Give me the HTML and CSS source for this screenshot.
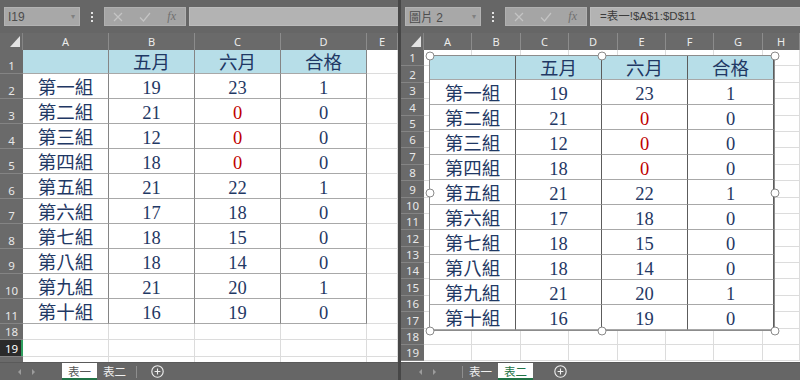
FILE: index.html
```html
<!DOCTYPE html>
<html lang="zh-Hant">
<head>
<meta charset="utf-8">
<title>Excel</title>
<link rel="stylesheet" href="styles.css">
</head>
<body>
<section class="pane pane-left">
  <div class="topbar">
    <div class="namebox"><span>I19</span><span class="caret">&#9662;</span></div>
    <div class="dots"><i></i><i></i><i></i></div>
    <div class="fxbtns">
      <span class="btn"><svg width="10" height="10" viewBox="0 0 10 10"><path d="M1 1L9 9M9 1L1 9" stroke="#c4c4c4" stroke-width="1.2" fill="none"/></svg></span>
      <span class="btn"><svg width="12" height="10" viewBox="0 0 12 10"><path d="M1 5.5L4.5 9L11 1" stroke="#c4c4c4" stroke-width="1.2" fill="none"/></svg></span>
      <span class="btn fx">fx</span>
    </div>
    <div class="formula"></div>
  </div>
  <div class="sheet">
    <div class="grid-left">
      <div class="corner"><i class="tri"></i></div>
      <div class="ch">A</div><div class="ch">B</div><div class="ch">C</div><div class="ch">D</div><div class="ch">E</div>

      <div class="rh">1</div><div class="t h"></div><div class="t h">五月</div><div class="t h">六月</div><div class="t h">合格</div><div class="c"></div>
      <div class="rh">2</div><div class="t">第一組</div><div class="t">19</div><div class="t">23</div><div class="t">1</div><div class="c"></div>
      <div class="rh">3</div><div class="t">第二組</div><div class="t">21</div><div class="t red">0</div><div class="t">0</div><div class="c"></div>
      <div class="rh">4</div><div class="t">第三組</div><div class="t">12</div><div class="t red">0</div><div class="t">0</div><div class="c"></div>
      <div class="rh">5</div><div class="t">第四組</div><div class="t">18</div><div class="t red">0</div><div class="t">0</div><div class="c"></div>
      <div class="rh">6</div><div class="t">第五組</div><div class="t">21</div><div class="t">22</div><div class="t">1</div><div class="c"></div>
      <div class="rh">7</div><div class="t">第六組</div><div class="t">17</div><div class="t">18</div><div class="t">0</div><div class="c"></div>
      <div class="rh">8</div><div class="t">第七組</div><div class="t">18</div><div class="t">15</div><div class="t">0</div><div class="c"></div>
      <div class="rh">9</div><div class="t">第八組</div><div class="t">18</div><div class="t">14</div><div class="t">0</div><div class="c"></div>
      <div class="rh">10</div><div class="t">第九組</div><div class="t">21</div><div class="t">20</div><div class="t">1</div><div class="c"></div>
      <div class="rh">11</div><div class="t">第十組</div><div class="t">16</div><div class="t">19</div><div class="t">0</div><div class="c"></div>
      <div class="rh">18</div><div class="c"></div><div class="c"></div><div class="c"></div><div class="c"></div><div class="c"></div>
      <div class="rh sel">19</div><div class="c"></div><div class="c"></div><div class="c"></div><div class="c"></div><div class="c"></div>
      <div class="rh">20</div><div class="c"></div><div class="c"></div><div class="c"></div><div class="c"></div><div class="c"></div>
    </div>
  </div>
  <div class="tabbar">
    <div class="arrows"><i class="al"></i><i class="ar"></i></div>
    <div class="tab active dim">表一</div>
    <div class="tab">表二</div>
    <i class="tsep"></i>
    <span class="add"><svg width="13" height="13" viewBox="0 0 13 13"><circle cx="6.5" cy="6.5" r="5.7" stroke="#f0f0f0" stroke-width="1.1" fill="none"/><path d="M6.5 3.6V9.4M3.6 6.5H9.4" stroke="#f0f0f0" stroke-width="1.1"/></svg></span>
  </div>
</section>

<section class="pane pane-right">
  <div class="topbar">
    <div class="namebox"><span>圖片 2</span><span class="caret">&#9662;</span></div>
    <div class="dots"><i></i><i></i><i></i></div>
    <div class="fxbtns">
      <span class="btn"><svg width="10" height="10" viewBox="0 0 10 10"><path d="M1 1L9 9M9 1L1 9" stroke="#c4c4c4" stroke-width="1.2" fill="none"/></svg></span>
      <span class="btn"><svg width="12" height="10" viewBox="0 0 12 10"><path d="M1 5.5L4.5 9L11 1" stroke="#c4c4c4" stroke-width="1.2" fill="none"/></svg></span>
      <span class="btn fx">fx</span>
    </div>
    <div class="formula">=表一!$A$1:$D$11</div>
  </div>
  <div class="sheet">
    <div class="grid-right">
      <div class="corner"><i class="tri"></i></div>
      <div class="ch">A</div><div class="ch">B</div><div class="ch">C</div><div class="ch">D</div><div class="ch">E</div><div class="ch">F</div><div class="ch">G</div><div class="ch">H</div>
      <div class="rh">1</div><i class="c"></i><i class="c"></i><i class="c"></i><i class="c"></i><i class="c"></i><i class="c"></i><i class="c"></i><i class="c"></i>
      <div class="rh">2</div><i class="c"></i><i class="c"></i><i class="c"></i><i class="c"></i><i class="c"></i><i class="c"></i><i class="c"></i><i class="c"></i>
      <div class="rh">3</div><i class="c"></i><i class="c"></i><i class="c"></i><i class="c"></i><i class="c"></i><i class="c"></i><i class="c"></i><i class="c"></i>
      <div class="rh">4</div><i class="c"></i><i class="c"></i><i class="c"></i><i class="c"></i><i class="c"></i><i class="c"></i><i class="c"></i><i class="c"></i>
      <div class="rh">5</div><i class="c"></i><i class="c"></i><i class="c"></i><i class="c"></i><i class="c"></i><i class="c"></i><i class="c"></i><i class="c"></i>
      <div class="rh">6</div><i class="c"></i><i class="c"></i><i class="c"></i><i class="c"></i><i class="c"></i><i class="c"></i><i class="c"></i><i class="c"></i>
      <div class="rh">7</div><i class="c"></i><i class="c"></i><i class="c"></i><i class="c"></i><i class="c"></i><i class="c"></i><i class="c"></i><i class="c"></i>
      <div class="rh">8</div><i class="c"></i><i class="c"></i><i class="c"></i><i class="c"></i><i class="c"></i><i class="c"></i><i class="c"></i><i class="c"></i>
      <div class="rh">9</div><i class="c"></i><i class="c"></i><i class="c"></i><i class="c"></i><i class="c"></i><i class="c"></i><i class="c"></i><i class="c"></i>
      <div class="rh">10</div><i class="c"></i><i class="c"></i><i class="c"></i><i class="c"></i><i class="c"></i><i class="c"></i><i class="c"></i><i class="c"></i>
      <div class="rh">11</div><i class="c"></i><i class="c"></i><i class="c"></i><i class="c"></i><i class="c"></i><i class="c"></i><i class="c"></i><i class="c"></i>
      <div class="rh">12</div><i class="c"></i><i class="c"></i><i class="c"></i><i class="c"></i><i class="c"></i><i class="c"></i><i class="c"></i><i class="c"></i>
      <div class="rh">13</div><i class="c"></i><i class="c"></i><i class="c"></i><i class="c"></i><i class="c"></i><i class="c"></i><i class="c"></i><i class="c"></i>
      <div class="rh">14</div><i class="c"></i><i class="c"></i><i class="c"></i><i class="c"></i><i class="c"></i><i class="c"></i><i class="c"></i><i class="c"></i>
      <div class="rh">15</div><i class="c"></i><i class="c"></i><i class="c"></i><i class="c"></i><i class="c"></i><i class="c"></i><i class="c"></i><i class="c"></i>
      <div class="rh">16</div><i class="c"></i><i class="c"></i><i class="c"></i><i class="c"></i><i class="c"></i><i class="c"></i><i class="c"></i><i class="c"></i>
      <div class="rh">17</div><i class="c"></i><i class="c"></i><i class="c"></i><i class="c"></i><i class="c"></i><i class="c"></i><i class="c"></i><i class="c"></i>
      <div class="rh">18</div><i class="c"></i><i class="c"></i><i class="c"></i><i class="c"></i><i class="c"></i><i class="c"></i><i class="c"></i><i class="c"></i>
      <div class="rh">19</div><i class="c"></i><i class="c"></i><i class="c"></i><i class="c"></i><i class="c"></i><i class="c"></i><i class="c"></i><i class="c"></i>
    </div>
    <div class="selbox">
      <div class="pic">
        <div class="t h"></div><div class="t h">五月</div><div class="t h">六月</div><div class="t h">合格</div>
        <div class="t">第一組</div><div class="t">19</div><div class="t">23</div><div class="t">1</div>
        <div class="t">第二組</div><div class="t">21</div><div class="t red">0</div><div class="t">0</div>
        <div class="t">第三組</div><div class="t">12</div><div class="t red">0</div><div class="t">0</div>
        <div class="t">第四組</div><div class="t">18</div><div class="t red">0</div><div class="t">0</div>
        <div class="t">第五組</div><div class="t">21</div><div class="t">22</div><div class="t">1</div>
        <div class="t">第六組</div><div class="t">17</div><div class="t">18</div><div class="t">0</div>
        <div class="t">第七組</div><div class="t">18</div><div class="t">15</div><div class="t">0</div>
        <div class="t">第八組</div><div class="t">18</div><div class="t">14</div><div class="t">0</div>
        <div class="t">第九組</div><div class="t">21</div><div class="t">20</div><div class="t">1</div>
        <div class="t">第十組</div><div class="t">16</div><div class="t">19</div><div class="t">0</div>
      </div>
      <i class="hd tl"></i><i class="hd tm"></i><i class="hd tr"></i>
      <i class="hd ml"></i><i class="hd mr"></i>
      <i class="hd bl"></i><i class="hd bm"></i><i class="hd br"></i>
    </div>
  </div>
  <div class="tabbar">
    <div class="arrows"><i class="al"></i><i class="ar"></i></div>
    <i class="tsep first"></i>
    <div class="tab">表一</div>
    <div class="tab active">表二</div>
    <span class="add add-r"><svg width="13" height="13" viewBox="0 0 13 13"><circle cx="6.5" cy="6.5" r="5.7" stroke="#f0f0f0" stroke-width="1.1" fill="none"/><path d="M6.5 3.6V9.4M3.6 6.5H9.4" stroke="#f0f0f0" stroke-width="1.1"/></svg></span>
  </div>
</section>
</body>
</html>
```

FILE: styles.css
```css
* { box-sizing: border-box; margin: 0; padding: 0; }

body {
  width: 800px;
  height: 380px;
  overflow: hidden;
  background: #474747;
  display: flex;
  gap: 3px;
  font-family: "Liberation Sans", "Noto Sans CJK TC", sans-serif;
}

.pane {
  display: flex;
  flex-direction: column;
  height: 380px;
  background: #666666;
}
.pane-left { width: 398px; }
.pane-right { width: 399px; }

/* formula bar */
.topbar {
  height: 33px;
  flex: none;
  display: flex;
  align-items: flex-start;
  padding: 7px 0 0 4px;
  background: #666666;
}
.namebox {
  width: 76px;
  height: 19px;
  background: #a8a8a8;
  border: 1px solid #b3b3b3;
  display: flex;
  align-items: center;
  justify-content: space-between;
  padding: 0 4px 0 3px;
  font-size: 12px;
  color: #4d4d4d;
  font-family: "Liberation Sans", "Noto Sans CJK TC", sans-serif;
}
.caret { font-size: 8px; color: #808080; }
.dots {
  width: 24px;
  height: 19px;
  display: flex;
  flex-direction: column;
  align-items: center;
  justify-content: center;
  gap: 2px;
}
.dots i { display: block; width: 2px; height: 2px; background: #e2e2e2; }
.fxbtns {
  width: 82px;
  height: 19px;
  background: #a5a5a5;
  border: 1px solid #b0b0b0;
  display: flex;
  align-items: center;
}
.btn {
  width: 27px;
  height: 17px;
  display: flex;
  align-items: center;
  justify-content: center;
}
.fx {
  font-family: "Liberation Serif", serif;
  font-style: italic;
  font-size: 12px;
  color: #707070;
}
.formula {
  flex: 1;
  height: 19px;
  margin-left: 3px;
  background: #b3b3b3;
  border: 1px solid #bcbcbc;
  border-right: none;
  padding-left: 9px;
  font-size: 11.5px;
  line-height: 17px;
  color: #3c3c3c;
}

/* sheet */
.sheet {
  flex: 1;
  min-height: 0;
  overflow: hidden;
  background: #ffffff;
  position: relative;
}
.grid-left {
  display: grid;
  grid-template-columns: 23px 86px 86px 86px 86px 31px;
  grid-template-rows: 17px 24px repeat(10, 25px) 16px 17px 17px;
}
.grid-right {
  display: grid;
  grid-template-columns: 23px 48px 49px 48px 49px 48px 48px 49px 1fr;
  grid-template-rows: 17px repeat(19, 16.4px);
}
.c {
  display: block;
  border-right: 1px solid #dcdcdc;
  border-bottom: 1px solid #dcdcdc;
}
.corner {
  background: #6a6a6a;
  border-right: 1px solid #858585;
  display: flex;
  align-items: flex-end;
  justify-content: flex-end;
  padding: 0 2px 3px 0;
}
.tri {
  display: block;
  width: 10px;
  height: 11px;
  background: #e4e4e4;
  clip-path: polygon(100% 0, 100% 100%, 0 100%);
}
.ch {
  background: #6a6a6a;
  border-right: 1px solid #8c8c8c;
  color: #ececec;
  font-family: "Noto Sans", sans-serif;
  font-size: 11px;
  line-height: 17px;
  text-align: center;
}
.rh {
  background: #6a6a6a;
  border-bottom: 1px solid #848484;
  color: #e8e8e8;
  font-family: "Noto Sans", sans-serif;
  font-size: 11.5px;
  line-height: 12px;
  display: flex;
  align-items: flex-end;
  justify-content: center;
  padding-bottom: 1px;
}
.rh.sel {
  background: #2a2a2a;
  color: #ffffff;
  box-shadow: inset -2px 0 0 #2f9e5e;
}

/* table cells */
.t {
  font-family: "Liberation Serif", "Noto Sans CJK TC", serif;
  font-size: 18.5px;
  color: #1f3864;
  text-align: center;
  padding-top: 4px;
  line-height: 20px;
  border-right: 1px solid #858585;
  border-bottom: 1px solid #a8a8a8;
  background: #ffffff;
  white-space: nowrap;
}
.t.h { background: #b7dee8; padding-top: 3px; }
.t.red { color: #c00000; }

/* linked picture */
.selbox {
  position: absolute;
  left: 28px;
  top: 22px;
  width: 346px;
  height: 276px;
}
.pic {
  width: 100%;
  height: 100%;
  border: 1px solid #8c8c8c;
  background: #ffffff;
  display: grid;
  grid-template-columns: repeat(4, 86px);
  grid-template-rows: 24px repeat(10, 25px);
}
.pic .t { border-right-color: #5c5c5c; }
.hd {
  position: absolute;
  width: 9px;
  height: 9px;
  border-radius: 50%;
  background: #ffffff;
  border: 1px solid #8a8a8a;
  transform: translate(-50%, -50%);
}
.tl { left: 0.5px; top: 0.5px; }
.tm { left: 50%; top: 0.5px; }
.tr { left: calc(100% - 0.5px); top: 0.5px; }
.ml { left: 0.5px; top: 50%; }
.mr { left: calc(100% - 0.5px); top: 50%; }
.bl { left: 0.5px; top: calc(100% - 0.5px); }
.bm { left: 50%; top: calc(100% - 0.5px); }
.br { left: calc(100% - 0.5px); top: calc(100% - 0.5px); }

/* sheet tabs */
.tabbar {
  height: 18px;
  flex: none;
  display: flex;
  align-items: stretch;
  padding-left: 14px;
  background: #666666;
  border-top: 1px solid #5a5a5a;
}
.arrows {
  width: 48px;
  display: flex;
  align-items: center;
  gap: 11px;
  padding-left: 4px;
}
.arrows i { display: block; width: 0; height: 0; border-top: 3px solid transparent; border-bottom: 3px solid transparent; }
.al { border-right: 3px solid #9c9c9c; }
.ar { border-left: 3px solid #9c9c9c; }
.pane-right .arrows { width: 47px; }
.tab {
  padding: 0 6px;
  font-family: "Noto Sans CJK TC", sans-serif;
  font-size: 11.5px;
  line-height: 16px;
  color: #f0f0f0;
}
.tab.active {
  background: #ffffff;
  color: #217346;
  border-bottom: 2px solid #217346;
}
.tab.active.dim { color: #555555; }
.tsep {
  display: block;
  width: 1px;
  margin: 3px 0 2px 4px;
  background: #8e8e8e;
}
.tsep.first { margin-left: 0; }
.add {
  display: flex;
  align-items: center;
  margin-left: 14px;
}
.add-r { margin-left: 21px; }
```
